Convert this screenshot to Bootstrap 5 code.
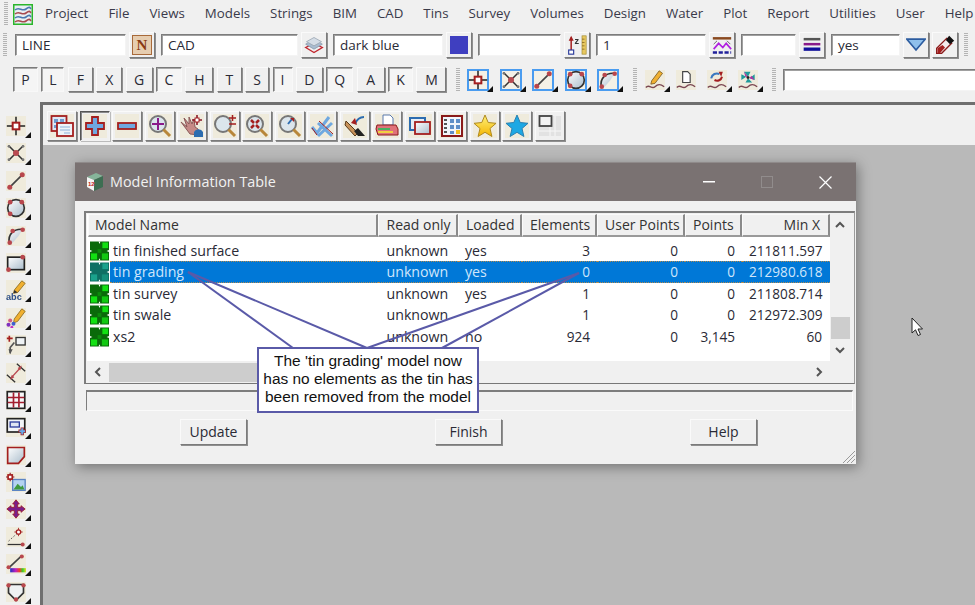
<!DOCTYPE html>
<html lang="en">
<head>
<meta charset="utf-8">
<title>Model Information Table</title>
<link href="https://cdn.jsdelivr.net/npm/bootstrap@5.3.0/dist/css/bootstrap.min.css" rel="stylesheet">
<style>
html,body{margin:0;padding:0;overflow:hidden;background:#f0f0f0}
body{font-family:"Open Sans","Noto Sans",sans-serif;font-size:13px;color:#2a2a35}
.appx{width:975px;height:605px;overflow:hidden}
.grip-v{width:4px;height:24px;flex:none;background:repeating-linear-gradient(180deg,#b4b4b4 0 1px,transparent 1px 2px)}
.grip-h{width:24px;height:4px;background:repeating-linear-gradient(90deg,#b4b4b4 0 1px,transparent 1px 2px)}
.menu-row{height:28px;padding-left:4px}
.menu-logo{width:20px;height:21px;margin-left:5px;margin-right:12px;flex:none}
.menu-list{gap:20px;font-size:13.3px;color:#3a3a4a;line-height:1;white-space:nowrap}
.row-two{height:26px;margin-top:4px;padding-left:3px;gap:6px}
.pair{gap:3px}
.row-three{height:25px;margin-top:9px;padding-left:13px}
.raised{background:#f0f0f0;border:1px solid;border-color:#fafafa #7b7b7b #7b7b7b #fafafa;box-shadow:1px 1px 0 #8f8f8f;padding:0;display:flex;align-items:center;justify-content:center;color:#2a2a35}
.inset{background:#fff;border:1px solid;border-color:#7d7d7d #f4f4f4 #f4f4f4 #7d7d7d;box-shadow:inset 1px 1px 0 #a0a0a0;padding-left:6px;font-size:13.5px;line-height:20px;height:22px;color:#2a2a35}
.sq26{width:26px;height:26px;flex:none}
.sq26 svg{width:20px;height:20px;filter:blur(.3px)}
.w-l{width:111px;margin-left:2px}.w-c{width:137px}.w-d{width:110px}.w-e{width:83px}.w-f{width:55px}.w-y{width:69px}
.swatch{width:18px;height:18px;background:#3f3fc0}
.nicon{width:20px;height:20px;background:#e6cdb0;border:1px solid #a86a3a;color:#8a3a12;font:bold 15px/18px "Liberation Serif",serif;text-align:center}
.ltrs{gap:3.4px}
.ltr{height:25px;font-size:14px;flex:none}
.ltr.on{background:#f5f5f5;border-color:#7b7b7b #f8f8f8 #f8f8f8 #7b7b7b;box-shadow:inset 1px 1px 0 #aaa}
.l20{width:20px}.l23{width:23px}.l25{width:25px}.l24{width:24px}.l26{width:26px}.l27{width:27px}.l28{width:28px}.l30{width:30px}
.snaps{gap:12.5px}
.tool{position:relative;width:20px;height:20px;flex:none;background:#efebdc}
.tool svg{display:block;width:100%;height:100%;filter:blur(.3px)}
.tool.blue{outline:2px solid #4a9cf0;outline-offset:-1px;background:#f4f1e6}
.tool.tri::after{content:"";position:absolute;right:-5px;bottom:-2px;border-style:solid;border-width:0 0 6px 6px;border-color:transparent transparent #111 transparent}
.wave-gap{gap:11px}
.grip-a{margin-left:10px;margin-right:8px}
.grip-b{margin-left:15px;margin-right:8px}
.grip-c{margin-left:14px}
.far-input{flex:1;height:22px;margin-left:7px;border-right:0}
.workspace{height:503px;margin-top:10px}
.side{width:40px;flex:none;padding-left:6px;padding-top:6px}
.side .grip-h{margin-bottom:8px}
.side-item{height:27.4px;flex:none}
.mainx{flex:1;border-left:3px solid #6f6f6f;border-top:3px solid #6f6f6f;min-width:0}
.top-tools{height:40px;padding:6px 0 0 4px;gap:2.5px}
.tbtn{width:30px;height:30px;flex:none}
.tbtn svg{width:24px;height:24px;background:#efebdc;filter:blur(.3px)}
.tbtn.pressed{border-color:#555 #f2f2f2 #f2f2f2 #555;box-shadow:inset 1px 1px 0 #888,1px 1px 0 #bbb}
.desk{flex:1;position:relative;background:#b9b9b9;height:460px}
.cursor-x{position:absolute;left:868px;top:172px;width:12px;height:20px}
.win{position:absolute;left:32px;top:17px;width:781px;height:302px;background:#f0f0f0;box-shadow:2px 3px 12px rgba(0,0,0,.38)}
.win-title{height:39px;background:#7a7272;color:#f1f1f1;font-size:14.4px;border-top:1px solid #8f8a8a;padding-left:11px;padding-right:2px}
.win-title .cube{width:18px;height:20px;margin-right:6px}
.wc{width:58px;height:38px;color:#fff}
.wc-min{margin-left:auto}
.frame{margin:10px 1px 0 9px;height:173px;border:2px solid #7d7d7d;border-right-color:#9a9a9a;border-bottom-color:#777;border-right-width:1px;border-bottom-width:1px;padding:1px 0 0 1px;font-size:14.2px;background:#f0f0f0}
.frame-main{width:743px;flex:none}
.table-white{height:147px;background:#fff;overflow:hidden}
.ttab{table-layout:fixed;width:742px;margin:0 0 0 1px;--bs-table-bg:transparent;--bs-table-color:#2a2a35;border-collapse:separate;border-spacing:0}
.ttab th{font-weight:400;font-size:14px;height:23px;padding:0 7px;background:#f0f0f0;border:1px solid;border-width:1px 2px 2px 1px;border-color:#fafafa #8a8a8a #9a9a9a #fafafa;color:#333;white-space:nowrap;line-height:20px;vertical-align:middle}
.ttab th.first{padding-left:6px}
.ttab td{padding:0 7px;height:21.33px;line-height:20px;border:0;vertical-align:middle;white-space:nowrap;overflow:hidden}
.ttab .spacer-row td{height:3px;padding:0;line-height:0;font-size:0}
.ttab td.ico-cell{padding:0 0 0 2px}
.ttab td.nm{padding-left:3px}
.ttab td.num{text-align:right;font-size:13.6px}
.ttab th.pad8{padding-left:7.5px}
.ttab td.pad8{padding-left:8.5px}
.ttab th.padr,.ttab td.padr{padding-right:8px}
.ttab tr.sel td:not(.ico-cell){background:#0078d7;color:#cfe6fb;border-top:1px dotted #b08a50;border-bottom:1px dotted #b08a50}
.tin{display:block;width:19px;height:20px;filter:blur(.2px)}
.c-i{width:22px}.c-n{width:268px}.c-r{width:80px}.c-l{width:64px}.c-e{width:75px}.c-u{width:88px}.c-p{width:57px}.c-m{width:88px}
.hscroll{height:22px;background:#f0f0f0;width:743px}
.sc-btn{width:22px;height:100%;color:#555;flex:none}
.sc-btn svg{width:10px;height:10px}
.h-thumb{background:#cdcdcd;width:300px;height:19px}
.vscroll{width:20px;height:100%;background:#f0f0f0;flex:none}
.v-up{height:22px}
.v-gap{height:81px}
.v-thumb{height:22px;background:#cdcdcd;width:19px}
.v-dn{height:22px}
.status-box{margin:6px 3px 0 11px;height:21px;border:1px solid;border-color:#7d7d7d #fafafa #fafafa #7d7d7d;border-top-width:2px}
.win-btns{margin-top:8px;padding-left:105px;gap:188px}
.dbtn{width:67px;height:26px;font-size:14px;padding-bottom:2px}
.resize{position:absolute;right:0;bottom:0;width:14px;height:14px}
.leaders{position:absolute;left:0;top:0;width:781px;height:302px;pointer-events:none}
.note{position:absolute;left:182px;top:185px;width:222px;height:66px;background:#fff;border:2px solid #5a5aa8;font-family:"Liberation Sans",sans-serif;font-size:15.45px;line-height:18px;color:#111;text-align:center;padding-top:3px;white-space:nowrap}
</style>
</head>
<body>
<svg width="0" height="0" class="position-absolute" aria-hidden="true">
<defs>
<linearGradient id="gb" x1="0" y1="0" x2="1" y2="1"><stop offset="0" stop-color="#fff"/><stop offset="1" stop-color="#a9bccb"/></linearGradient>
<linearGradient id="gy" x1="0" y1="0" x2="0" y2="1"><stop offset="0" stop-color="#fff27a"/><stop offset="1" stop-color="#f3b400"/></linearGradient>
<linearGradient id="ga" x1="0" y1="0" x2="1" y2="0"><stop offset="0" stop-color="#2030c0"/><stop offset=".35" stop-color="#c020c0"/><stop offset=".6" stop-color="#f04020"/><stop offset=".8" stop-color="#30d030"/><stop offset="1" stop-color="#f0e020"/></linearGradient>
<symbol id="p-point" viewBox="0 0 24 24"><path d="M1 12H23M12 1V23" stroke="#222" stroke-width="1.8"/><rect x="8" y="8" width="8" height="8" fill="#fff" stroke="#a41f1f" stroke-width="2.4"/></symbol>
<symbol id="p-cross" viewBox="0 0 24 24"><path d="M3 3L21 21M21 3L3 21" stroke="#333" stroke-width="1.8"/><circle cx="12" cy="12" r="3.6" fill="#b84a50"/><circle cx="3.5" cy="4" r="1.6" fill="#777"/><circle cx="20.5" cy="4" r="1.6" fill="#777"/><circle cx="20.5" cy="20" r="1.6" fill="#777"/><circle cx="3.5" cy="20" r="1.6" fill="#777"/></symbol>
<symbol id="p-line" viewBox="0 0 24 24"><path d="M4 20L20 4" stroke="#444" stroke-width="2"/><circle cx="4.5" cy="19.5" r="3" fill="#b8474d"/><circle cx="19.5" cy="4.5" r="3" fill="#b8474d"/></symbol>
<symbol id="p-circle" viewBox="0 0 24 24"><circle cx="12" cy="12" r="10" fill="url(#gb)" stroke="#333" stroke-width="2"/><circle cx="5" cy="5" r="2.8" fill="#b8474d"/><circle cx="19" cy="5" r="2.8" fill="#b8474d"/><circle cx="5" cy="19" r="2.8" fill="#b8474d"/></symbol>
<symbol id="p-arc" viewBox="0 0 24 24"><path d="M4 20C2 10 9 3 20 4L15 12L8 20Z" fill="url(#gb)"/><path d="M4 20C2 10 9 3 20 4" fill="none" stroke="#333" stroke-width="2"/><circle cx="4.5" cy="20" r="2.8" fill="#b8474d"/><circle cx="8" cy="6" r="2.8" fill="#b8474d"/><circle cx="20" cy="4.5" r="2.8" fill="#b8474d"/></symbol>
<symbol id="p-rect" viewBox="0 0 24 24"><rect x="2" y="5" width="20" height="15" fill="url(#gb)" stroke="#222" stroke-width="2"/><circle cx="20" cy="5" r="2.8" fill="#b8474d"/><circle cx="3" cy="20" r="2.8" fill="#b8474d"/></symbol>
<symbol id="p-abc" viewBox="0 0 24 24"><path d="M10 12L19 1L23 4L14 15L9 16Z" fill="#f0b030" stroke="#8a6a20" stroke-width="1"/><path d="M9 16L10 12L14 15Z" fill="#333"/><text x="0" y="23.5" font-family="Liberation Sans,sans-serif" font-size="11" font-weight="700" fill="#2c4f8a">abc</text></symbol>
<symbol id="p-penc" viewBox="0 0 24 24"><path d="M10 13L19 1L23 4L14 16L9 18Z" fill="#f0b030" stroke="#8a6a20" stroke-width="1"/><circle cx="5" cy="15" r="2.4" fill="#d06080"/><circle cx="9" cy="19" r="2.4" fill="#4060d0"/><circle cx="3" cy="20" r="2.4" fill="#8030c0"/><circle cx="7" cy="23" r="1.8" fill="#c030c0"/></symbol>
<symbol id="p-link" viewBox="0 0 24 24"><path d="M1 4H8M4 1V8" stroke="#a41f1f" stroke-width="2"/><rect x="12" y="3" width="11" height="9" fill="#eef2f5" stroke="#333" stroke-width="1.6"/><path d="M10 9L5 15V22" fill="none" stroke="#555" stroke-width="2"/><path d="M3 17L5 23L8 17Z" fill="#555"/></symbol>
<symbol id="p-dim" viewBox="0 0 24 24"><path d="M1 14L11 23M13 1L23 10" stroke="#333" stroke-width="1.6"/><path d="M7 17L17 6" stroke="#b8474d" stroke-width="1.6"/><path d="M5 20L7 14L10 17ZM19 3L14 6L17 9Z" fill="#b8474d"/></symbol>
<symbol id="p-grid" viewBox="0 0 24 24"><rect x="1.5" y="2" width="21" height="20" fill="#f7f7f7" stroke="#222" stroke-width="2"/><path d="M2 9H22M2 15H22" stroke="#a41f2f" stroke-width="2"/><path d="M9 3V21M15.500 3V21" stroke="#a41f2f" stroke-width="2"/></symbol>
<symbol id="p-box" viewBox="0 0 24 24"><rect x="1.500" y="2" width="21" height="16" fill="#f2f5f8" stroke="#222" stroke-width="2"/><rect x="5" y="6" width="11" height="6" fill="#dfe6f3" stroke="#2c3c9c" stroke-width="1.600"/><path d="M15 17H24M19.500 12.500V22" stroke="#a41f1f" stroke-width="4"/><path d="M16 17H23M19.500 13.500V21" stroke="#68a8e8" stroke-width="2.400"/></symbol>
<symbol id="p-fold" viewBox="0 0 24 24"><path d="M2 3H22V14L15 22H2Z" fill="url(#gb)" stroke="#a41f1f" stroke-width="2"/></symbol>
<symbol id="p-pic" viewBox="0 0 24 24"><rect x="8" y="9" width="15" height="13" fill="#b5d3f2" stroke="#5b84c4" stroke-width="1.600"/><path d="M9 21L14 14L18 18L20 16L22 21Z" fill="#3f9a3f"/><path d="M5 1V11M0 6H10" stroke="#8b1a2a" stroke-width="1.400"/><rect x="2.500" y="3.500" width="5" height="5" fill="#fff" stroke="#a41f1f" stroke-width="2"/></symbol>
<symbol id="p-move" viewBox="0 0 24 24"><path d="M12 1L16 6H14V10H18V8L23 12L18 16V14H14V18H16L12 23L8 18H10V14H6V16L1 12L6 8V10H10V6H8Z" fill="#7b1f8a" stroke="#9a1c2a" stroke-width="1"/></symbol>
<symbol id="p-dotl" viewBox="0 0 24 24"><path d="M3 17L13 8" stroke="#444" stroke-dasharray="2 2"/><path d="M2 21H21" stroke="#333" stroke-width="1.500"/><circle cx="20" cy="21" r="2.400" fill="#b8474d"/><path d="M15 1V11M10 6H20" stroke="#a41f1f"/><circle cx="15" cy="6" r="2.600" fill="#fff" stroke="#a41f1f" stroke-width="1.600"/></symbol>
<symbol id="p-lcol" viewBox="0 0 24 24"><path d="M3 17L19 2" stroke="#444" stroke-width="2"/><circle cx="3" cy="16" r="2.400" fill="#b8474d"/><circle cx="19" cy="3" r="2.400" fill="#b8474d"/><rect x="5" y="17" width="19" height="5" fill="url(#ga)"/></symbol>
<symbol id="p-shield" viewBox="0 0 24 24"><path d="M3 3H21V13L12 22L3 13Z" fill="#eef1f3" stroke="#333" stroke-width="2"/><circle cx="3" cy="4" r="2.600" fill="#b8474d"/><circle cx="21" cy="4" r="2.600" fill="#b8474d"/><circle cx="12" cy="21" r="2.600" fill="#b8474d"/></symbol>
<symbol id="w-pen" viewBox="0 0 24 24"><path d="M8 13L17 1L21 4L12 16L7 17Z" fill="#f0b030" stroke="#7a5a20"/><path d="M1 21C5 16 8 24 12 20S19 17 23 20" fill="none" stroke="#7a4650" stroke-width="1.600"/></symbol>
<symbol id="w-doc" viewBox="0 0 24 24"><path d="M8 2H14L17 5V15H8Z" fill="#fff" stroke="#444" stroke-width="1.400"/><path d="M1 21C5 16 8 24 12 20S19 17 23 20" fill="none" stroke="#7a4650" stroke-width="1.600"/></symbol>
<symbol id="w-flip" viewBox="0 0 24 24"><path d="M5 10C6 5 11 3 15 5" fill="none" stroke="#3a78c0" stroke-width="2.500"/><path d="M18 8C17 12 13 14 9 12" fill="none" stroke="#a41f1f" stroke-width="2.500"/><path d="M14 2L19 2L17 8Z" fill="#a41f1f"/><path d="M1 21C5 16 8 24 12 20S19 17 23 20" fill="none" stroke="#7a4650" stroke-width="1.600"/></symbol>
<symbol id="w-fan" viewBox="0 0 24 24"><path d="M7 2H15L12 8ZM20 5V12L14 10ZM17 15H9L12 10ZM4 12V5L10 8Z" fill="#1f9a9a"/><path d="M7 2L12 8L9 8ZM20 12L14 10L16 7Z" fill="#b030a0"/><circle cx="12" cy="9" r="1.800" fill="#222"/><path d="M1 21C5 16 8 24 12 20S19 17 23 20" fill="none" stroke="#7a4650" stroke-width="1.600"/></symbol>
<symbol id="t-windows" viewBox="0 0 24 24"><rect x="1.500" y="2" width="15" height="15" fill="#dfe8f5" stroke="#a41f1f" stroke-width="1.800"/><path d="M4 5H8V9H4ZM10 5H14V9H10ZM4 11H8V14H4Z" fill="#6f9cd0"/><rect x="7" y="9" width="16" height="13" fill="#eef3f8" stroke="#a41f1f" stroke-width="1.800"/><path d="M10 13H20M10 16H20M14 19H20" stroke="#8db1da"/></symbol>
<symbol id="t-plus" viewBox="0 0 24 24"><path d="M3 9H9V3H15V9H21V15H15V21H9V15H3Z" fill="#6fa8e0" stroke="#a41f1f" stroke-width="1.800"/></symbol>
<symbol id="t-minus" viewBox="0 0 24 24"><rect x="3" y="9" width="18" height="6" fill="#6fa8e0" stroke="#a41f1f" stroke-width="1.800"/></symbol>
<symbol id="t-mag" viewBox="0 0 24 24"><circle cx="10" cy="10" r="8" fill="#dbe5ec" stroke="#777" stroke-width="2"/><path d="M15.500 15.500L22 22" stroke="#b8863a" stroke-width="3"/></symbol>
<symbol id="t-hand" viewBox="0 0 24 24"><path d="M1 8L7 13L4 4L9 10L9 3L12 10L14 5L15 13L18 15L19 21L10 20Z" fill="#c68a86" stroke="#8a5a58" stroke-width="1"/><path d="M14 18A5 5 0 0 1 23 18V23H14Z" fill="#2c6cb0"/><path d="M17 1V11M12 6H22" stroke="#8a1a2a" stroke-width="1.600"/><rect x="15" y="4" width="4" height="4" fill="#fff" stroke="#a41f1f"/></symbol>
<symbol id="t-lines" viewBox="0 0 24 24"><path d="M2 13L7 19L19 3" fill="none" stroke="#6fa8e0" stroke-width="3"/><path d="M8 9L22 22M22 9L8 22" stroke="#6fa8e0" stroke-width="3"/><path d="M2 14L7 21" stroke="#a41f1f" stroke-width="1"/><path d="M9 7L23 20" stroke="#a41f1f" stroke-width="1"/></symbol>
<symbol id="t-brush" viewBox="0 0 24 24"><path d="M3 7L15 19L12 22L2 11Z" fill="#c8925a" stroke="#5a3a1a"/><path d="M11 17L15 14L22 22L15 22Z" fill="#222"/><path d="M12 10C14 5 17 3 21 3" fill="none" stroke="#2c6cb0" stroke-width="2"/><path d="M12 4L14 11L8 9Z" fill="#a41f1f"/></symbol>
<symbol id="t-print" viewBox="0 0 24 24"><path d="M8 1H15L18 4V11H8Z" fill="#fff" stroke="#5a7ab0"/><path d="M2 11H21L23 15V21H3L1 15Z" fill="#e0727a" stroke="#8a1a1a"/><rect x="3" y="14" width="12" height="2" fill="#49b060"/><rect x="3" y="17" width="15" height="2" fill="#f0d040"/></symbol>
<symbol id="t-wins" viewBox="0 0 24 24"><rect x="2" y="4" width="15" height="12" fill="#e7eef6" stroke="#2c6cb0" stroke-width="2"/><rect x="7" y="8" width="15" height="12" fill="url(#gb)" stroke="#a41f1f" stroke-width="1.800"/></symbol>
<symbol id="t-sheet" viewBox="0 0 24 24"><rect x="2" y="2" width="20" height="20" fill="#f2f6fb" stroke="#8a1a1a" stroke-width="2"/><path d="M4 6H7M4 10H7M4 14H7M4 18H7" stroke="#222" stroke-width="1.400"/><path d="M10 5H14V9H10ZM16 5H20V9H16ZM10 11H14V15H10ZM16 11H20V15H16ZM10 17H14V20H10Z" fill="#5f8fc8"/><rect x="16" y="16" width="4" height="4" fill="#f0c020"/></symbol>
<symbol id="t-stary" viewBox="0 0 24 24"><path d="M12 1L15.200 8.500L23 9.300L17 14.500L18.900 22.500L12 18.300L5.100 22.500L7 14.500L1 9.300L8.800 8.500Z" fill="url(#gy)" stroke="#b08a20"/></symbol>
<symbol id="t-starb" viewBox="0 0 24 24"><path d="M12 1L15.200 8.500L23 9.300L17 14.500L18.900 22.500L12 18.300L5.100 22.500L7 14.500L1 9.300L8.800 8.500Z" fill="#1da8e4" stroke="#2b80b0"/></symbol>
<symbol id="t-layout" viewBox="0 0 24 24"><rect width="24" height="24" fill="#f0f0f0"/><path d="M13 2H23V22H1V13" fill="#e2e2e2"/><path d="M12 12V22M1 17H23M17 2V22" stroke="#f7f7f7"/><rect x="1.500" y="2" width="12" height="10" fill="#f2f2f2" stroke="#444" stroke-width="1.800"/></symbol>
<symbol id="b-layers" viewBox="0 0 24 24"><path d="M2 15L12 21L22 15L12 10Z" fill="none" stroke="#c0242c" stroke-width="1.600"/><path d="M2 11L12 17L22 11L12 5Z" fill="#a8bcd0" stroke="#8a9aac"/><path d="M3 8L12 13L21 8L12 3Z" fill="#d5dde6" stroke="#9aa6b2"/></symbol>
<symbol id="b-iz" viewBox="0 0 24 24"><path d="M5 20V3" stroke="#a41f1f" stroke-width="1.800"/><path d="M2 7L5 1L8 7Z" fill="#a41f1f"/><rect x="2" y="18" width="6" height="5" fill="#fff" stroke="#2c3c9c" stroke-width="1.400"/><text x="9" y="11" font-family="Liberation Sans,sans-serif" font-size="11" font-weight="700" fill="#333">z</text><rect x="18" y="1" width="5" height="22" fill="#e8c860" stroke="#a08a30" stroke-width=".8"/><path d="M18 5H21M18 9H21M18 13H21M18 17H21" stroke="#8a6a20"/></symbol>
<symbol id="b-road" viewBox="0 0 24 24"><path d="M1 4H23" stroke="#8a4a20" stroke-width="3"/><path d="M6 7L2 11M18 7L22 11" stroke="#555" stroke-width="1"/><path d="M2 17L8 10L13 15L17 10L23 17" fill="none" stroke="#b020e0" stroke-width="2"/><path d="M1 21H23" stroke="#20209a" stroke-width="3" stroke-dasharray="5 2"/></symbol>
<symbol id="b-bars" viewBox="0 0 24 24"><path d="M2 5H22" stroke="#555" stroke-width="3"/><path d="M2 11H22" stroke="#8a1a8a" stroke-width="3"/><path d="M2 17H22" stroke="#10109a" stroke-width="4"/></symbol>
<symbol id="b-drop" viewBox="0 0 24 24"><path d="M1 5H23L12 18Z" fill="#8fc0ec" stroke="#2c5ca0" stroke-width="2"/></symbol>
<symbol id="b-dropper" viewBox="0 0 24 24"><path d="M14 4L20 10L8 22H2V16Z" fill="#f2eaea" stroke="#8a1a1a" stroke-width="1.600"/><path d="M3 22V16L9 12L12 15L6 22Z" fill="#a41f1f"/><path d="M13 6L17 1L23 7L18 11Z" fill="#111"/></symbol>
<symbol id="tin-a" viewBox="0 0 20 20"><rect width="20" height="20" fill="#0a6a0a"/><rect x="1" y="12.500" width="6.500" height="6.500" fill="#12e012"/><rect x="13" y="1" width="6" height="6" fill="#12e012"/><rect x="12.500" y="12.500" width="6.500" height="6.500" fill="#12c812"/><path d="M0 9L2.500 10L0 11ZM20 9L17.500 10L20 11ZM9 0L10 2.500L11 0ZM9 20L10 17.500L11 20Z" fill="#fff"/><path d="M8 8H12V12H8Z" fill="#0c8a0c"/></symbol>
<symbol id="tin-s" viewBox="0 0 20 20"><rect width="20" height="20" fill="#0e7064"/><rect x="1" y="12.500" width="6.500" height="6.500" fill="#1aa28c"/><rect x="13" y="1" width="6" height="6" fill="#1aa28c"/><rect x="12.500" y="12.500" width="6.500" height="6.500" fill="#15907c"/><path d="M0 9L2.500 10L0 11ZM20 9L17.500 10L20 11ZM9 0L10 2.500L11 0ZM9 20L10 17.500L11 20Z" fill="#fff"/></symbol>
</defs>
</svg>

<div class="appx d-flex flex-column">
  <div class="menu-row d-flex align-items-center">
    <div class="grip-v"></div>
    <svg class="menu-logo" viewBox="0 0 20 21"><rect x=".75" y=".75" width="18.500" height="19.500" fill="#e9eef2" stroke="#2bb52b" stroke-width="1.500"/><path d="M2 6C6 2 9 8 13 5S17 4 18 5" fill="none" stroke="#4a78b0" stroke-width="1.600"/><path d="M2 10C6 6 9 12 13 9S17 8 18 9" fill="none" stroke="#a84a50" stroke-width="1.600"/><path d="M2 14C6 10 9 16 13 13S17 12 18 13" fill="none" stroke="#4a78b0" stroke-width="1.600"/><path d="M2 18C6 14 9 20 13 17S17 16 18 17" fill="none" stroke="#a84a50" stroke-width="1.600"/></svg>
    <div class="menu-list d-flex">
      <span>Project</span><span>File</span><span>Views</span><span>Models</span><span>Strings</span><span>BIM</span><span>CAD</span><span>Tins</span><span>Survey</span><span>Volumes</span><span>Design</span><span>Water</span><span>Plot</span><span>Report</span><span>Utilities</span><span>User</span><span>Help</span>
    </div>
  </div>

  <div class="row-two d-flex align-items-center">
    <div class="grip-v"></div>
    <div class="pair d-flex align-items-center"><div class="inset w-l">LINE</div><div class="raised sq26"><div class="nicon">N</div></div></div>
    <div class="pair d-flex align-items-center"><div class="inset w-c">CAD</div><div class="raised sq26"><svg><use href="#b-layers"/></svg></div></div>
    <div class="pair d-flex align-items-center"><div class="inset w-d">dark blue</div><div class="raised sq26"><div class="swatch"></div></div></div>
    <div class="pair d-flex align-items-center"><div class="inset w-e"></div><div class="raised sq26"><svg><use href="#b-iz"/></svg></div></div>
    <div class="pair d-flex align-items-center"><div class="inset w-d">1</div><div class="raised sq26"><svg><use href="#b-road"/></svg></div></div>
    <div class="pair d-flex align-items-center"><div class="inset w-f"></div><div class="raised sq26"><svg><use href="#b-bars"/></svg></div></div>
    <div class="pair d-flex align-items-center"><div class="inset w-y">yes</div><div class="raised sq26"><svg><use href="#b-drop"/></svg></div><div class="raised sq26"><svg><use href="#b-dropper"/></svg></div></div>
    <div class="grip-v"></div>
  </div>

  <div class="row-three d-flex align-items-center">
    <div class="ltrs d-flex">
      <div class="raised ltr on l25">P</div><div class="raised ltr on l23">L</div><div class="raised ltr l25">F</div><div class="raised ltr l26">X</div><div class="raised ltr l27">G</div><div class="raised ltr on l26">C</div><div class="raised ltr l28">H</div><div class="raised ltr l25">T</div><div class="raised ltr l24">S</div><div class="raised ltr on l20">I</div><div class="raised ltr l27">D</div><div class="raised ltr on l27">Q</div><div class="raised ltr l28">A</div><div class="raised ltr on l25">K</div><div class="raised ltr l30">M</div>
    </div>
    <div class="grip-v grip-a"></div>
    <div class="snaps d-flex">
      <div class="tool blue tri"><svg><use href="#p-point"/></svg></div>
      <div class="tool blue tri"><svg><use href="#p-cross"/></svg></div>
      <div class="tool blue tri"><svg><use href="#p-line"/></svg></div>
      <div class="tool blue tri"><svg><use href="#p-circle"/></svg></div>
      <div class="tool blue tri"><svg><use href="#p-arc"/></svg></div>
    </div>
    <div class="grip-v grip-b"></div>
    <div class="wave-gap d-flex">
      <div class="tool tri"><svg><use href="#w-pen"/></svg></div>
      <div class="tool"><svg><use href="#w-doc"/></svg></div>
      <div class="tool tri"><svg><use href="#w-flip"/></svg></div>
      <div class="tool tri"><svg><use href="#w-fan"/></svg></div>
    </div>
    <div class="grip-v grip-c"></div>
    <div class="inset far-input"></div>
  </div>

  <div class="workspace d-flex">
    <div class="side d-flex flex-column">
      <div class="grip-h"></div>
      <div class="side-item"><div class="tool tri"><svg><use href="#p-point"/></svg></div></div>
      <div class="side-item"><div class="tool tri"><svg><use href="#p-cross"/></svg></div></div>
      <div class="side-item"><div class="tool tri"><svg><use href="#p-line"/></svg></div></div>
      <div class="side-item"><div class="tool tri"><svg><use href="#p-circle"/></svg></div></div>
      <div class="side-item"><div class="tool tri"><svg><use href="#p-arc"/></svg></div></div>
      <div class="side-item"><div class="tool tri"><svg><use href="#p-rect"/></svg></div></div>
      <div class="side-item"><div class="tool tri"><svg><use href="#p-abc"/></svg></div></div>
      <div class="side-item"><div class="tool tri"><svg><use href="#p-penc"/></svg></div></div>
      <div class="side-item"><div class="tool tri"><svg><use href="#p-link"/></svg></div></div>
      <div class="side-item"><div class="tool tri"><svg><use href="#p-dim"/></svg></div></div>
      <div class="side-item"><div class="tool tri"><svg><use href="#p-grid"/></svg></div></div>
      <div class="side-item"><div class="tool tri"><svg><use href="#p-box"/></svg></div></div>
      <div class="side-item"><div class="tool tri"><svg><use href="#p-fold"/></svg></div></div>
      <div class="side-item"><div class="tool tri"><svg><use href="#p-pic"/></svg></div></div>
      <div class="side-item"><div class="tool tri"><svg><use href="#p-move"/></svg></div></div>
      <div class="side-item"><div class="tool tri"><svg><use href="#p-dotl"/></svg></div></div>
      <div class="side-item"><div class="tool tri"><svg><use href="#p-lcol"/></svg></div></div>
      <div class="side-item"><div class="tool tri"><svg><use href="#p-shield"/></svg></div></div>
    </div>
    <div class="mainx d-flex flex-column">
      <div class="top-tools d-flex">
        <div class="raised tbtn"><svg><use href="#t-windows"/></svg></div>
        <div class="raised tbtn pressed"><svg><use href="#t-plus"/></svg></div>
        <div class="raised tbtn"><svg><use href="#t-minus"/></svg></div>
        <div class="raised tbtn"><svg viewBox="0 0 24 24"><use href="#t-mag" width="24" height="24"/><path d="M10 4V16M4 10H16" stroke="#8a1a8a" stroke-width="2"/></svg></div>
        <div class="raised tbtn"><svg><use href="#t-hand"/></svg></div>
        <div class="raised tbtn"><svg viewBox="0 0 24 24"><use href="#t-mag" width="24" height="24"/><path d="M16 4H23M19.500 1V7M16 10H23" stroke="#a41f1f" stroke-width="1.500"/></svg></div>
        <div class="raised tbtn"><svg viewBox="0 0 24 24"><use href="#t-mag" width="24" height="24"/><path d="M6 6L9 9M14 6L11 9M6 14L9 11M14 14L11 11" stroke="#a41f1f" stroke-width="2.500"/></svg></div>
        <div class="raised tbtn"><svg viewBox="0 0 24 24"><use href="#t-mag" width="24" height="24"/><path d="M10 10L14 5" stroke="#2c6cb0" stroke-width="2"/><path d="M12 4H16V8Z" fill="#a41f1f"/></svg></div>
        <div class="raised tbtn"><svg><use href="#t-lines"/></svg></div>
        <div class="raised tbtn"><svg><use href="#t-brush"/></svg></div>
        <div class="raised tbtn"><svg><use href="#t-print"/></svg></div>
        <div class="raised tbtn"><svg><use href="#t-wins"/></svg></div>
        <div class="raised tbtn"><svg><use href="#t-sheet"/></svg></div>
        <div class="raised tbtn"><svg><use href="#t-stary"/></svg></div>
        <div class="raised tbtn"><svg><use href="#t-starb"/></svg></div>
        <div class="raised tbtn"><svg><use href="#t-layout"/></svg></div>
      </div>
      <div class="desk">
        <svg class="cursor-x" viewBox="0 0 12 20"><path d="M1 1V16L4.500 12.800L7 18.500L9.500 17.500L7 12H11.500Z" fill="#fff" stroke="#222" stroke-width="1"/></svg>
        <div class="win">
          <div class="win-title d-flex align-items-center">
            <svg class="cube" viewBox="0 0 18 20"><path d="M1 5L10 1L17 4L8 8Z" fill="#86b59a"/><path d="M1 5L8 8V19L1 15Z" fill="#f4f4f4"/><path d="M8 8L17 4V15L8 19Z" fill="#3d6e52"/><text x="2" y="14" font-family="Liberation Sans,sans-serif" font-size="6" font-weight="700" fill="#c01c1c">12</text></svg>
            <span>Model Information Table</span>
            <div class="wc wc-min d-flex align-items-center justify-content-center"><svg width="12" height="2"><rect width="12" height="1.500" fill="#fff"/></svg></div>
            <div class="wc d-flex align-items-center justify-content-center"><svg width="12" height="12"><rect x=".5" y=".5" width="11" height="11" fill="none" stroke="#918c8c"/></svg></div>
            <div class="wc d-flex align-items-center justify-content-center"><svg width="13" height="13"><path d="M.5.500L12.500 12.500M12.500.500L.5 12.500" stroke="#fff" stroke-width="1.200"/></svg></div>
          </div>
          <div class="frame d-flex">
            <div class="frame-main">
              <div class="table-white">
                <table class="table table-borderless ttab">
                  <colgroup><col class="c-i"><col class="c-n"><col class="c-r"><col class="c-l"><col class="c-e"><col class="c-u"><col class="c-p"><col class="c-m"></colgroup>
                  <thead><tr><th colspan="2" class="first">Model Name</th><th class="pad8">Read only</th><th>Loaded</th><th>Elements</th><th>User Points</th><th>Points</th><th class="text-end padr">Min X</th></tr></thead>
                  <tbody>
                    <tr class="spacer-row"><td colspan="8"></td></tr>
                    <tr><td class="ico-cell"><svg class="tin"><use href="#tin-a"/></svg></td><td class="nm">tin finished surface</td><td class="pad8">unknown</td><td>yes</td><td class="num">3</td><td class="num">0</td><td class="num">0</td><td class="num padr">211811.597</td></tr>
                    <tr class="sel"><td class="ico-cell"><svg class="tin"><use href="#tin-s"/></svg></td><td class="nm">tin grading</td><td class="pad8">unknown</td><td>yes</td><td class="num">0</td><td class="num">0</td><td class="num">0</td><td class="num padr">212980.618</td></tr>
                    <tr><td class="ico-cell"><svg class="tin"><use href="#tin-a"/></svg></td><td class="nm">tin survey</td><td class="pad8">unknown</td><td>yes</td><td class="num">1</td><td class="num">0</td><td class="num">0</td><td class="num padr">211808.714</td></tr>
                    <tr><td class="ico-cell"><svg class="tin"><use href="#tin-a"/></svg></td><td class="nm">tin swale</td><td class="pad8">unknown</td><td></td><td class="num">1</td><td class="num">0</td><td class="num">0</td><td class="num padr">212972.309</td></tr>
                    <tr><td class="ico-cell"><svg class="tin"><use href="#tin-a"/></svg></td><td class="nm">xs2</td><td class="pad8">unknown</td><td>no</td><td class="num">924</td><td class="num">0</td><td class="num">3,145</td><td class="num padr">60</td></tr>
                  </tbody>
                </table>
              </div>
              <div class="hscroll d-flex align-items-center">
                <div class="sc-btn d-flex align-items-center justify-content-center"><svg viewBox="0 0 10 10"><path d="M7 1L3 5L7 9" fill="none" stroke="#555" stroke-width="2"/></svg></div>
                <div class="h-thumb"></div>
                <div class="sc-btn ms-auto d-flex align-items-center justify-content-center"><svg viewBox="0 0 10 10"><path d="M3 1L7 5L3 9" fill="none" stroke="#555" stroke-width="2"/></svg></div>
              </div>
            </div>
            <div class="vscroll d-flex flex-column align-items-center">
              <div class="v-up d-flex align-items-center justify-content-center"><svg width="10" height="10" viewBox="0 0 10 10"><path d="M1 7L5 3L9 7" fill="none" stroke="#555" stroke-width="2"/></svg></div>
              <div class="v-gap"></div>
              <div class="v-thumb"></div>
              <div class="v-dn d-flex align-items-center justify-content-center"><svg width="10" height="10" viewBox="0 0 10 10"><path d="M1 3L5 7L9 3" fill="none" stroke="#555" stroke-width="2"/></svg></div>
            </div>
          </div>
          <div class="status-box"></div>
          <div class="win-btns d-flex">
            <div class="raised dbtn">Update</div>
            <div class="raised dbtn">Finish</div>
            <div class="raised dbtn">Help</div>
          </div>
          <svg class="resize" viewBox="0 0 14 14"><path d="M13 1L1 13M13 5L5 13M13 9L9 13" stroke="#9a9a9a"/></svg>
          <svg class="leaders" viewBox="0 0 781 302"><g fill="none" stroke="#5a5aa8" stroke-width="2"><path d="M113 110L218 186"/><path d="M113 110L292 186"/><path d="M504 111L292 186"/><path d="M504 111L367 186"/></g></svg>
          <div class="note">The 'tin grading' model now<br>has no elements as the tin has<br>been removed from the model</div>
        </div>
      </div>
    </div>
  </div>
</div>
<script src="https://cdn.jsdelivr.net/npm/bootstrap@5.3.0/dist/js/bootstrap.bundle.min.js"></script>
</body>
</html>
